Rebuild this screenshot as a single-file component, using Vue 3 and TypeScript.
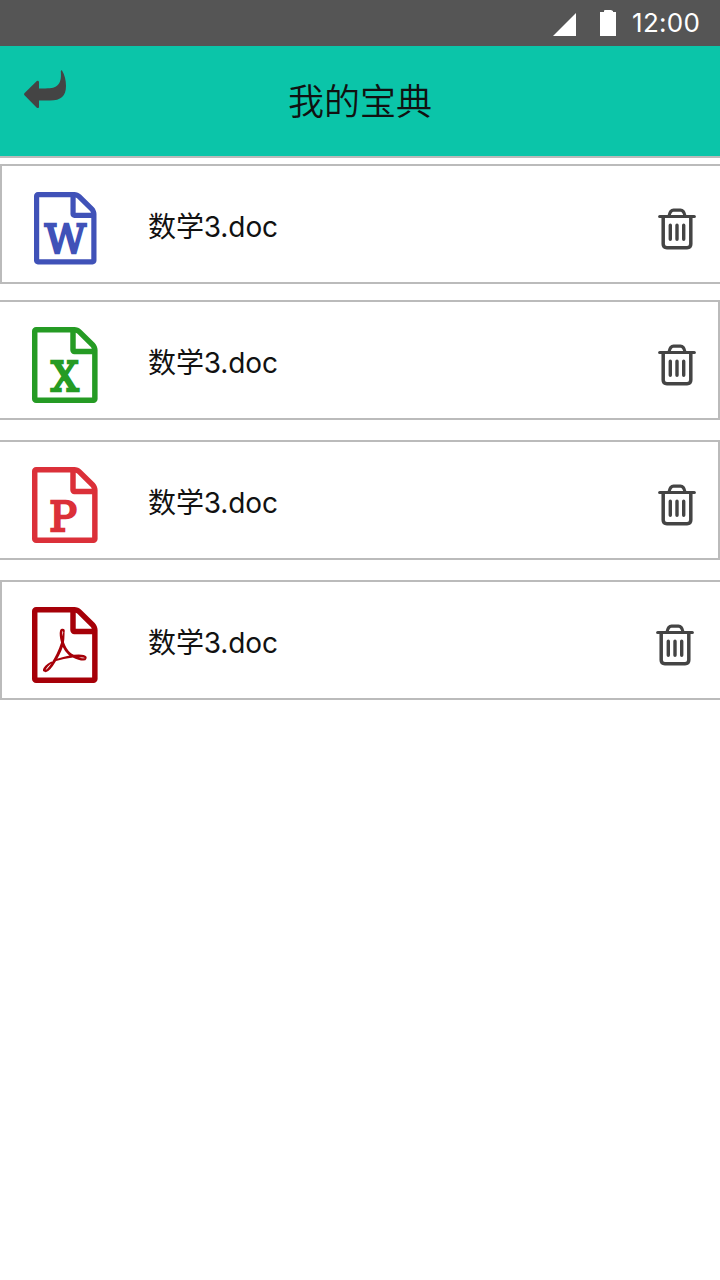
<script setup lang="ts">
type FileKind = 'word' | 'excel' | 'ppt' | 'pdf'

interface FileRow {
  id: number
  name: string
  kind: FileKind
  color: string
  letter: string
  letterWidth: number
  letterX: number
  edge: 'left' | 'right'
}

const files: FileRow[] = [
  { id: 1, name: '数学3.doc', kind: 'word', color: '#4052b8', letter: 'W', letterWidth: 1015, letterX: 265, edge: 'left' },
  { id: 2, name: '数学3.doc', kind: 'excel', color: '#259b24', letter: 'X', letterWidth: 650, letterX: 444, edge: 'right' },
  { id: 3, name: '数学3.doc', kind: 'ppt', color: '#db3039', letter: 'P', letterWidth: 650, letterX: 402, edge: 'right' },
  { id: 4, name: '数学3.doc', kind: 'pdf', color: '#a60008', letter: '', letterWidth: 0, letterX: 0, edge: 'left' },
]
</script>

<template>
  <div class="screen">
    <div class="status">
      <svg class="signal" viewBox="0 0 23 23"><path d="M23 0V23H0Z" /></svg>
      <svg class="battery" viewBox="0 0 16 26"><path d="M0 2H4V1Q4 0 5 0H11L13 1V2H16V26H0Z" /></svg>
      <span class="time">12:00</span>
    </div>
    <header class="header">
      <svg class="back" viewBox="0 0 44 40">
        <path d="M.4 23.3Q-.3 24.4.5 25.3L12.8 37.7Q15.2 38.8 15 36.5V30.6H26C37 30.4 42 26 42 16C42 10 40.5 4.5 38 .5Q37 0 36.8 1.2C37.2 7 37.2 13.4 31.5 16.7C28.5 18.2 25 18.4 15 18.5V12Q14.6 10.3 12.8 11Z" />
      </svg>
      <h1>我的宝典</h1>
    </header>
    <main class="list">
      <div v-for="file in files" :key="file.id" class="row" :class="[file.edge, file.kind]">
        <svg class="file" viewBox="0 0 1536 1792" preserveAspectRatio="none" :fill="file.color">
          <path d="M1468 380q28 28 48 76t20 88v1152q0 40-28 68t-68 28h-1344q-40 0-68-28t-28-68v-1600q0-40 28-68t68-28h896q40 0 88 20t76 48zm-444-244v376h376q-10-29-22-41l-313-313q-12-12-41-22zm384 1528v-1024h-416q-40 0-68-28t-28-68v-416h-768v1536h1280z" />
          <text v-if="file.letter" class="letter" :stroke="file.color" :x="file.letterX" y="1506" :textLength="file.letterWidth" lengthAdjust="spacingAndGlyphs">{{ file.letter }}</text>
          <path v-else d="M894 1071q33 26 84 56 59-7 117-7 147 0 177 49 16 22 2 52 0 1-1 2l-2 2v1q-6 38-71 38-48 0-115-20t-130-53q-221 24-392 83-153 262-242 262-15 0-28-7l-24-12q-1-1-6-5-10-10-6-36 9-40 56-91.5t132-96.5q14-9 23 6 2 2 2 4 52-85 107-197 68-136 104-262-24-82-30.5-159.5t6.5-127.5q11-40 42-40h22q23 0 35 15 18 21 9 68-2 6-4 8 1 3 1 8v30q-2 123-14 192 55 164 146 238zm-576 411q52-24 137-158-51 40-87.5 84t-49.5 74zm398-920q-15 42-2 132 1-7 7-44 0-3 7-43 1-4 4-8-1-1-1-2t-1-2q-1-22-13-36 0 1-1 2v2zm-124 661q135-54 284-81-2-1-13-9.5t-16-13.5q-76-67-127-176-27 86-83 197-30 56-45 83zm646-16q-24-24-140-24 76 28 124 28 14 0 18-1 0-1-2-3z" />
        </svg>
        <span class="name">{{ file.name }}</span>
        <svg class="trash" viewBox="0 0 38 42">
          <path d="M1.7 8.5H36.3" stroke-width="3.2" />
          <path d="M5.2 9V36Q5.2 39.7 8.9 39.7H29.1Q32.8 39.7 32.8 36V9" stroke-width="3.5" />
          <path d="M11 8C11.8 4 13.2 2.2 15.5 2.2H22.5C24.8 2.2 26.2 4 27 8" stroke-width="3.2" />
          <path d="M12.3 17.2V31.2M19 17.2V31.2M25.7 17.2V31.2" stroke-width="3.4" />
        </svg>
      </div>
    </main>
  </div>
</template>

<style>
body {
  margin: 0;
  background: #fff;
}
</style>

<style scoped>
.screen {
  width: 720px;
  height: 1280px;
  overflow: hidden;
  background: #fff;
  color: #111;
  font-family: Inter, "Noto Sans CJK SC", sans-serif;
  font-weight: 395;
}
.status {
  display: flex;
  height: 46px;
  background: #555;
  color: #fff;
  fill: #fff;
}
.signal {
  width: 23px;
  height: 23px;
  margin: 13px 0 0 553px;
}
.battery {
  width: 16px;
  height: 26px;
  margin: 10px 0 0 24px;
}
.time {
  margin-left: 16px;
  font-size: 26px;
  line-height: 46px;
  letter-spacing: 0.3px;
  white-space: nowrap;
}
.header {
  display: grid;
  grid-template-columns: 100px 1fr 100px;
  box-sizing: border-box;
  height: 112px;
  border-bottom: 2px solid #bbb;
  background: #0bc5a9;
}
.back {
  width: 44px;
  height: 40px;
  margin: 24px 0 0 24px;
  fill: #444;
}
h1 {
  margin: 0;
  font-size: 36px;
  font-weight: 350;
  line-height: 112px;
  text-align: center;
}
.list {
  display: flex;
  flex-direction: column;
  gap: 20px;
  padding-top: 6px;
}
.row {
  display: flex;
  align-items: flex-start;
  box-sizing: border-box;
  width: 720px;
  height: 120px;
  border: 2px solid #bbb;
}
.row.left {
  border-right: 0;
}
.row.right {
  border-left: 0;
  padding-left: 2px;
}
.row.word {
  margin-bottom: -4px;
}
.file {
  flex: none;
  width: 65.6px;
  height: 76px;
  margin: 25px 0 0 30.4px;
}
.word .file {
  width: 62.5px;
  height: 72.5px;
  margin: 26px 1.5px 0 32px;
}
.letter {
  font-family: "DejaVu Serif", serif;
  font-size: 970px;
  font-weight: 400;
  stroke-width: 56px;
}
.name {
  margin-left: 50px;
  font-size: 28px;
  line-height: 122px;
  letter-spacing: -0.1px;
}
.trash {
  flex: none;
  width: 38px;
  height: 42px;
  margin: 42px 24px 0 auto;
  fill: none;
  stroke: #444;
  stroke-linecap: round;
}
.right .trash {
  margin-right: 22px;
}
.pdf .trash {
  margin-right: 26px;
}
</style>
